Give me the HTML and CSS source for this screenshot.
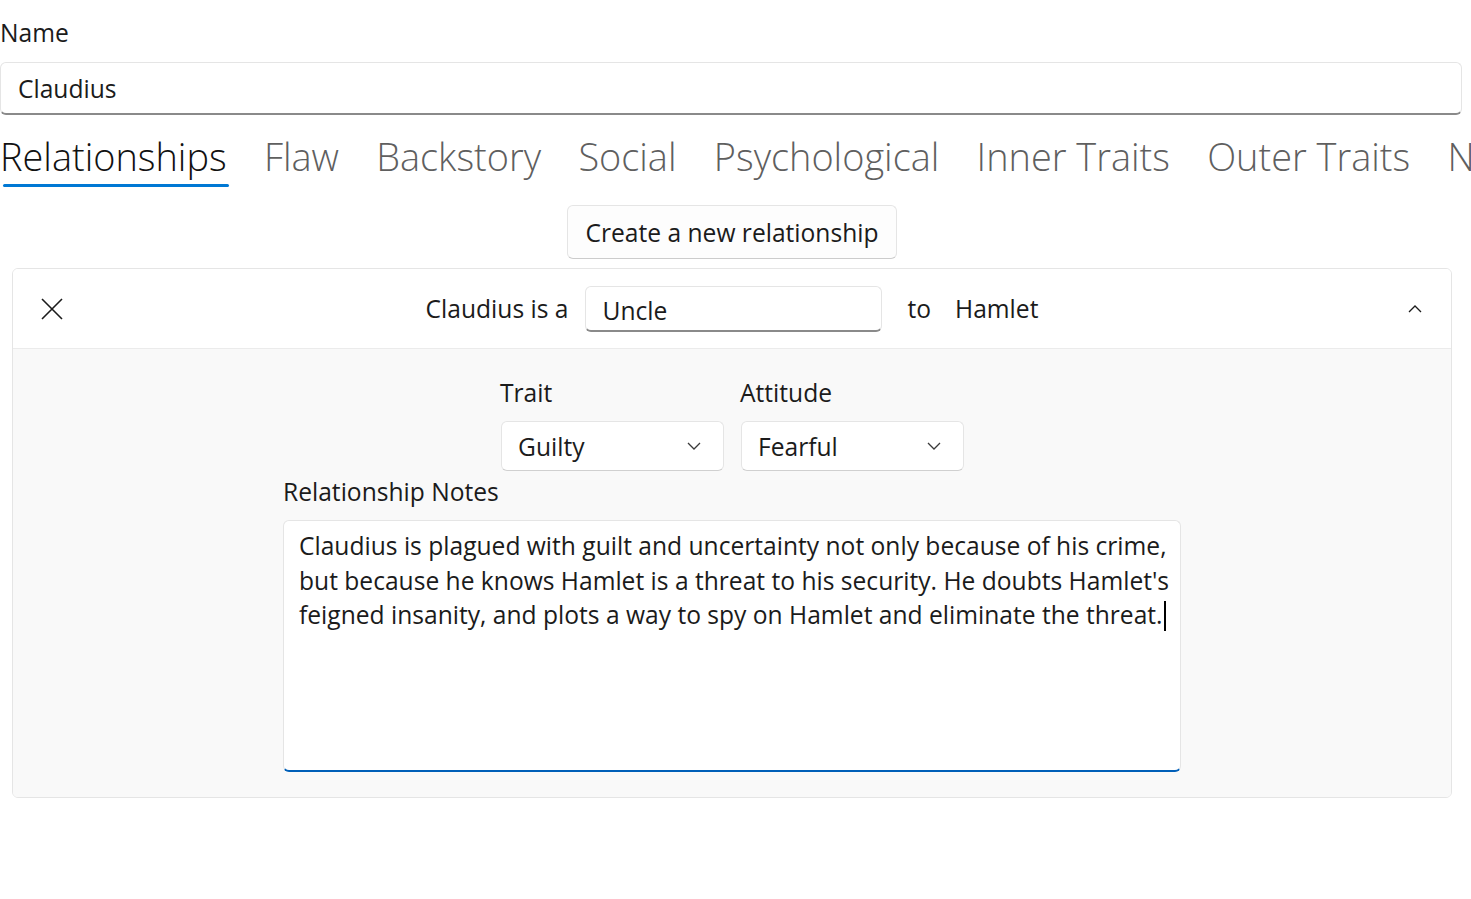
FILE: index.html
```html
<!DOCTYPE html>
<html>
<head>
<meta charset="utf-8">
<link rel="stylesheet" href="styles.css">
</head>
<body>
<div class="page">
  <div class="field-label">Name</div>
  <div class="textbox name-box">Claudius</div>

  <div class="tabs">
    <div class="tab active">Relationships</div>
    <div class="tab">Flaw</div>
    <div class="tab">Backstory</div>
    <div class="tab">Social</div>
    <div class="tab">Psychological</div>
    <div class="tab">Inner Traits</div>
    <div class="tab">Outer Traits</div>
    <div class="tab">Notes</div>
  </div>

  <div class="actions">
    <button class="btn">Create a new relationship</button>
  </div>

  <div class="card">
    <div class="card-header">
      <div class="header-left">
        <span class="icon-btn">
          <svg width="24" height="24" viewBox="0 0 24 24"><path d="M2 2 L22 22 M22 2 L2 22" stroke="#1b1b1b" stroke-width="1.6" fill="none"/></svg>
        </span>
      </div>
      <div class="header-center">
        <span class="rel-text">Claudius is a</span>
        <div class="textbox uncle-box">Uncle</div>
        <span class="rel-text to">to</span>
        <span class="rel-text">Hamlet</span>
      </div>
      <div class="header-right">
        <span class="icon-btn">
          <svg width="14" height="8" viewBox="0 0 14 8"><path d="M1 7 L7 1 L13 7" stroke="#1b1b1b" stroke-width="1.3" fill="none"/></svg>
        </span>
      </div>
    </div>
    <div class="card-body">
      <div class="combos">
        <div class="combo-group">
          <div class="field-label">Trait</div>
          <div class="combo"><span>Guilty</span>
            <svg width="14" height="8" viewBox="0 0 14 8"><path d="M1 1 L7 7 L13 1" stroke="#3a3a3a" stroke-width="1.3" fill="none"/></svg>
          </div>
        </div>
        <div class="combo-group">
          <div class="field-label">Attitude</div>
          <div class="combo"><span>Fearful</span>
            <svg width="14" height="8" viewBox="0 0 14 8"><path d="M1 1 L7 7 L13 1" stroke="#3a3a3a" stroke-width="1.3" fill="none"/></svg>
          </div>
        </div>
      </div>
      <div class="notes">
        <div class="field-label">Relationship Notes</div>
        <div class="notes-box">
          <div class="line">Claudius is plagued with guilt and uncertainty not only because of his crime,</div>
          <div class="line">but because he knows Hamlet is a threat to his security. He doubts Hamlet's</div>
          <div class="line">feigned insanity, and plots a way to spy on Hamlet and eliminate the threat.<span class="caret"></span></div>
        </div>
      </div>
    </div>
  </div>
</div>
</body>
</html>
```

FILE: styles.css
```css
* { box-sizing: border-box; }
html, body {
  margin: 0;
  padding: 0;
  background: #ffffff;
  overflow: hidden;
}
body {
  font-family: "Open Sans", "Noto Sans", sans-serif;
  font-size: 24.6px;
  color: #1b1b1b;
  width: 1471px;
  height: 899px;
}
.page {
  padding-top: 15px;
  width: 1471px;
  overflow: hidden;
}
.field-label {
  line-height: 35px;
  margin-bottom: 12px;
}
.textbox {
  background: #fff;
  border: 1px solid #e5e5e5;
  border-bottom: 2px solid #8a8a8a;
  border-radius: 6px;
  display: flex;
  align-items: center;
}
.name-box {
  width: 1462px;
  height: 53px;
  padding-left: 17px;
}
.tabs {
  display: flex;
  gap: 37.3px;
  white-space: nowrap;
  margin-top: 5px;
  height: 75px;
}
.tab {
  font-size: 37.9px;
  font-weight: 300;
  line-height: 48px;
  color: #5f5f5f;
  position: relative;
  padding-top: 12px;
  flex: none;
}
.tab.active {
  color: #111111;
}
.tab.active::after {
  content: "";
  position: absolute;
  left: 3px;
  right: -2px;
  top: 64px;
  height: 3px;
  border-radius: 2px;
  background: #0078d4;
}
.actions {
  display: flex;
  justify-content: center;
  width: 1464px;
  margin-top: 10px;
}
.btn {
  font-family: inherit;
  font-size: 24.6px;
  color: #1b1b1b;
  background: #fdfdfd;
  border: 1px solid #e5e5e5;
  border-bottom-color: #cccccc;
  border-radius: 6px;
  height: 54px;
  padding: 0 17px;
}
.card {
  margin: 9px 0 0 12px;
  width: 1440px;
  border: 1px solid #e5e5e5;
  border-radius: 6px;
  overflow: hidden;
}
.card-header {
  height: 80px;
  display: grid;
  grid-template-columns: 1fr auto 1fr;
  align-items: center;
  background: #fff;
  border-bottom: 1px solid #ebebeb;
}
.header-left { padding-left: 27px; display: flex; }
.header-right { display: flex; justify-content: flex-end; padding-right: 29px; }
.icon-btn { display: flex; align-items: center; }
.header-center {
  display: flex;
  align-items: center;
}
.rel-text { line-height: 35px; }
.uncle-box {
  width: 297px;
  height: 46px;
  margin: 0 25px 0 17px;
  padding-left: 16px;
  padding-top: 4px;
}
.to { margin-right: 24px; }
.card-body {
  background: #f9f9f9;
  padding: 26px 0 25px;
  display: flex;
  flex-direction: column;
  align-items: center;
}
.combos {
  display: flex;
  gap: 17px;
  margin-left: 1px;
}
.combo-group .field-label {
  margin-bottom: 11px;
  margin-left: -1px;
}
.combo {
  width: 223px;
  height: 50px;
  background: #fff;
  border: 1px solid #e5e5e5;
  border-bottom-color: #d0d0d0;
  border-radius: 6px;
  display: flex;
  align-items: center;
  justify-content: space-between;
  padding: 0 22px 0 16px;
}
.notes {
  margin-top: 3px;
}
.notes .field-label {
  margin-bottom: 11px;
}
.notes-box {
  width: 898px;
  height: 252px;
  background: #fff;
  border: 1px solid #e5e5e5;
  border-bottom: 2px solid #005fb8;
  border-radius: 6px;
  padding: 8px 0 0 15px;
  white-space: nowrap;
}
.line { line-height: 34.5px; }
.caret {
  display: inline-block;
  width: 2px;
  height: 30px;
  background: #000;
  vertical-align: -7px;
  margin-left: 1px;
}
```
